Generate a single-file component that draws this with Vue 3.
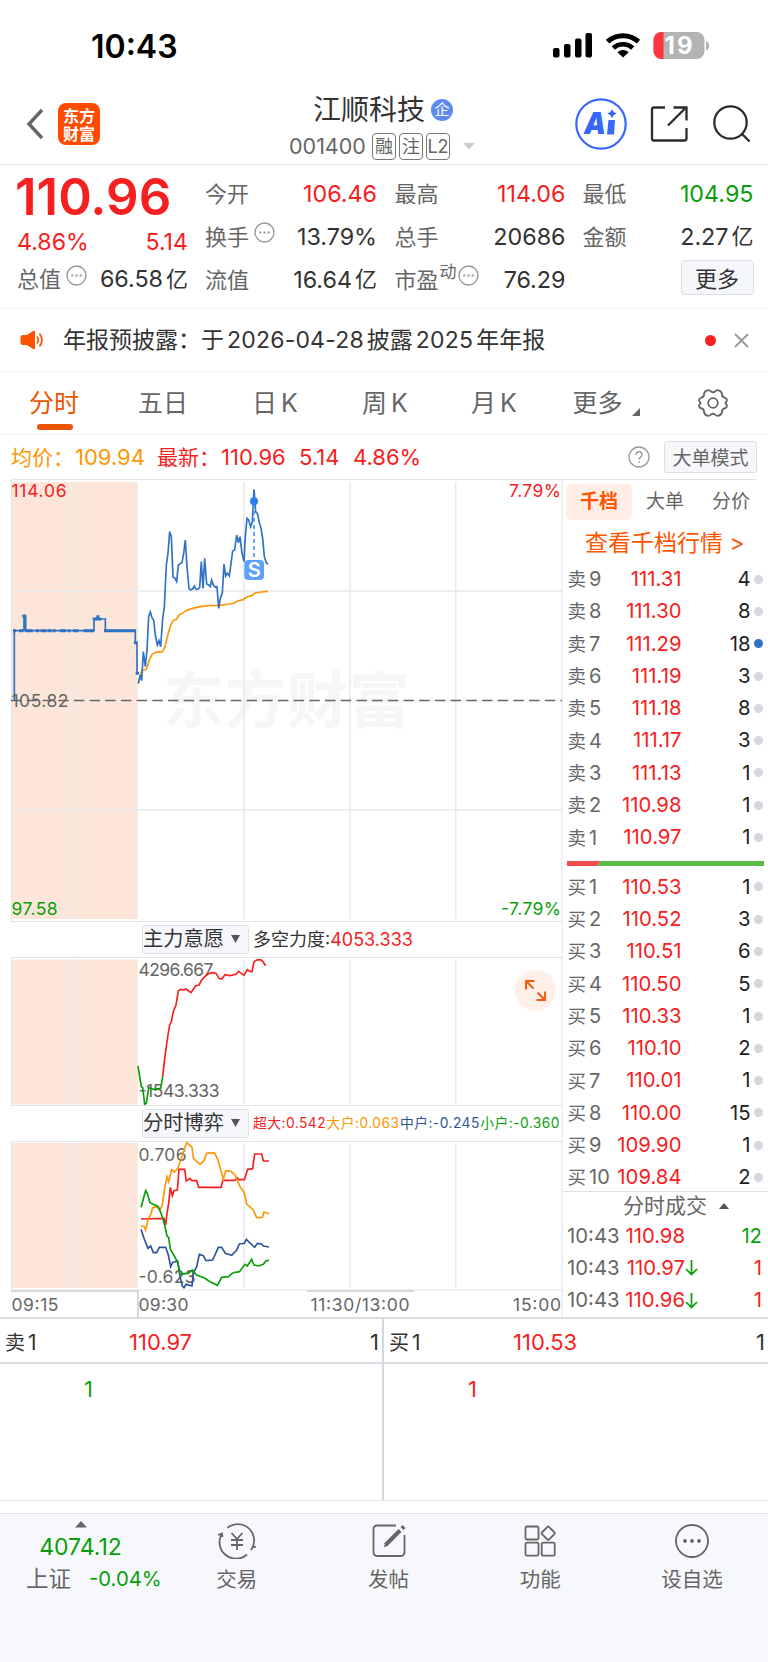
<script setup>
import { ref } from 'vue'

const tags = ['融', '注', 'L2']

const periods = [
  { label: '分时', width: 108 },
  { label: '五日', width: 110 },
  { label: '日', k: true, width: 114 },
  { label: '周', k: true, width: 106 },
  { label: '月', k: true, width: 112 },
]
const activePeriod = ref('分时')

const sells = [
  { label: '卖', level: 9, price: '111.31', qty: 4 },
  { label: '卖', level: 8, price: '111.30', qty: 8 },
  { label: '卖', level: 7, price: '111.29', qty: 18, big: true },
  { label: '卖', level: 6, price: '111.19', qty: 3 },
  { label: '卖', level: 5, price: '111.18', qty: 8 },
  { label: '卖', level: 4, price: '111.17', qty: 3 },
  { label: '卖', level: 3, price: '111.13', qty: 1 },
  { label: '卖', level: 2, price: '110.98', qty: 1 },
  { label: '卖', level: 1, price: '110.97', qty: 1 },
]

const buys = [
  { label: '买', level: 1, price: '110.53', qty: 1 },
  { label: '买', level: 2, price: '110.52', qty: 3 },
  { label: '买', level: 3, price: '110.51', qty: 6 },
  { label: '买', level: 4, price: '110.50', qty: 5 },
  { label: '买', level: 5, price: '110.33', qty: 1 },
  { label: '买', level: 6, price: '110.10', qty: 2 },
  { label: '买', level: 7, price: '110.01', qty: 1 },
  { label: '买', level: 8, price: '110.00', qty: 15 },
  { label: '买', level: 9, price: '109.90', qty: 1 },
  { label: '买', level: 10, price: '109.84', qty: 2 },
]

const deals = [
  { time: '10:43', price: '110.98', qty: 12, side: 'green' },
  { time: '10:43', price: '110.97', qty: 1, side: 'red', down: true },
  { time: '10:43', price: '110.96', qty: 1, side: 'red', down: true },
]

const gridX = [74.5, 244, 350, 455.7]
</script>

<template>
  <div class="page">
    <div class="status">
      <span class="clock">10:43</span>
      <svg class="status-icons" width="160" height="30" viewBox="550 30 160 30">
        <rect x="553" y="48" width="6.5" height="9.5" rx="2" />
        <rect x="564" y="44" width="6.5" height="13.5" rx="2" />
        <rect x="575" y="38.5" width="6.5" height="19" rx="2" />
        <rect x="585.5" y="33" width="6.5" height="24.5" rx="2" />
        <g fill="none" stroke="#000" stroke-width="5">
          <path d="M607.5 41.700A23 23 0 0 1 638.5 41.700" />
          <path d="M613.3 48A14.5 14.5 0 0 1 632.7 48" stroke-width="4.6" />
        </g>
        <path d="M617.3 52.300Q623 47.500 628.7 52.300L623 57.500Z" />
        <clipPath id="battery"><rect x="653.5" y="32" width="51" height="27" rx="8" /></clipPath>
        <g clip-path="url(#battery)">
          <rect x="653" y="32" width="52" height="27" fill="#b3b3b3" />
          <rect x="653" y="32" width="10.5" height="27" fill="#ff3640" />
        </g>
        <path d="M706 41v9.500q3.200-1.500 3.200-4.750T706 41z" fill="#b3b3b3" />
        <text x="664.5" y="54" class="battery-num" textLength="28">19</text>
      </svg>
    </div>

    <header class="header">
      <svg class="back" width="18" height="32" viewBox="0 0 18 32">
        <path d="M17 2 4 16l13 14" fill="none" stroke="#666" stroke-width="3.4" />
      </svg>
      <div class="logo"><span>东方</span><span>财富</span></div>
      <div class="title">
        <div class="name">江顺科技<span class="corp">企</span></div>
        <div class="code">
          <span class="code-num">001400</span>
          <span v-for="tag in tags" :key="tag" class="tag">{{ tag }}</span>
          <svg width="12" height="7" viewBox="0 0 12 7"><path d="M0 0h12L6 6.500z" fill="#ccc" /></svg>
        </div>
      </div>
      <svg class="header-icons" width="176" height="56" viewBox="574 96 176 56">
        <circle cx="601" cy="124" r="24.7" fill="#fff" stroke="#3768fb" stroke-width="2.2" />
        <text x="584" y="133.5" class="ai" textLength="22" lengthAdjust="spacingAndGlyphs">A</text>
        <path d="M608.500 120h6.500l-1 14.500h-7z" fill="#3768fb" />
        <path d="M612 109l1.600 3 3 1.600-3 1.600-1.600 3-1.600-3-3-1.600 3-1.600z" fill="#3768fb" />
        <g fill="none" stroke="#2c2c2c" stroke-width="2.3">
          <path d="M665 107.500h-11q-2 0-2 2v29q0 2 2 2h30.500q2 0 2-2V128M668 125.500 686 107.500M673.500 107.500h13v13" />
          <circle cx="730.5" cy="122.5" r="16.2" />
          <path d="M741.500 133.500l8 8" />
        </g>
      </svg>
    </header>

    <section class="quote">
      <div class="quote-main">
        <div class="price red">110.96</div>
        <div class="row between red"><span class="n1">4.86%</span><span class="n1">5.14</span></div>
        <div class="row">
          <span class="lbl">总值</span>
          <svg class="dots" viewBox="0 0 20 20"><circle cx="10" cy="10" r="9" /><path d="M5 10h2M9 10h2M13 10h2" /></svg>
          <span class="val">66.58<i>亿</i></span>
        </div>
      </div>
      <div class="quote-col col2">
        <div class="row"><span class="lbl">今开</span><span class="val red">106.46</span></div>
        <div class="row">
          <span class="lbl">换手</span>
          <svg class="dots" viewBox="0 0 20 20"><circle cx="10" cy="10" r="9" /><path d="M5 10h2M9 10h2M13 10h2" /></svg>
          <span class="val">13.79%</span>
        </div>
        <div class="row"><span class="lbl">流值</span><span class="val">16.64<i>亿</i></span></div>
      </div>
      <div class="quote-col col3">
        <div class="row"><span class="lbl">最高</span><span class="val red">114.06</span></div>
        <div class="row"><span class="lbl">总手</span><span class="val">20686</span></div>
        <div class="row">
          <span class="lbl">市盈</span><sup class="dyn">动</sup>
          <svg class="dots near" viewBox="0 0 20 20"><circle cx="10" cy="10" r="9" /><path d="M5 10h2M9 10h2M13 10h2" /></svg>
          <span class="val">76.29</span>
        </div>
      </div>
      <div class="quote-col col4">
        <div class="row"><span class="lbl">最低</span><span class="val green">104.95</span></div>
        <div class="row"><span class="lbl">金额</span><span class="val">2.27<i>亿</i></span></div>
        <div class="row end"><button class="more">更多</button></div>
      </div>
    </section>

    <section class="notice">
      <svg width="24" height="20" viewBox="0 0 24 20">
        <path d="M3 5h4l6-4q2-1 2 1v16q0 2-2 1l-6-4H3q-2.500 0-2.500-2.500v-5Q.5 5 3 5z" fill="#fd5202" />
        <path d="M17 6.500q2.500 3.500 0 7M19.500 3.500q5 6.500 0 13" fill="none" stroke="#fd5202" stroke-width="1.7" />
      </svg>
      <p>年报预披露：于<b>2026-04-28</b>披露<b>2025</b>年年报</p>
      <span class="dot"></span>
      <svg width="15" height="15" viewBox="0 0 15 15"><path d="M1 1l13 13M14 1 1 14" stroke="#999" stroke-width="1.9" /></svg>
    </section>

    <nav class="periods">
      <div
        v-for="p in periods"
        :key="p.label"
        class="period"
        :class="{ active: p.label === activePeriod }"
        :style="{ width: p.width + 'px' }"
        @click="activePeriod = p.label"
      >
        {{ p.label }}<b v-if="p.k">K</b>
      </div>
      <div class="period last">
        更多
        <svg width="8" height="8" viewBox="0 0 8 8"><path d="M8 0v8H0z" fill="#666" /></svg>
      </div>
      <svg class="gear" width="32" height="30" viewBox="-16 -15 32 30">
        <path d="M-5-12.800Q-3-12.800-2-11.500Q0-10 2-11.500Q3-12.800 5-12.800Q8.500-12 9-9Q8.800-6 11.500-5.500Q15-4 13.500-1.500Q11.500 0 13.500 1.500Q15 4 11.500 5.500Q8.800 6 9 9Q8.500 12 5 12.800Q3 12.800 2 11.500Q0 10-2 11.500Q-3 12.800-5 12.800Q-8.500 12-9 9Q-8.800 6-11.500 5.500Q-15 4-13.500 1.500Q-11.500 0-13.500-1.500Q-15-4-11.500-5.500Q-8.800-6-9-9Q-8.500-12-5-12.800Z" />
        <circle r="4.8" />
      </svg>
    </nav>

    <section class="summary">
      <span class="avg cn">均价：</span><span class="avg s-avg">109.94</span>
      <span class="red cn">最新：</span><span class="red s-last">110.96</span>
      <span class="red s-diff">5.14</span><span class="red">4.86%</span>
      <svg class="help" width="22" height="22" viewBox="0 0 22 22">
        <circle cx="11" cy="11" r="10" fill="none" stroke="#999" stroke-width="1.3" />
        <path d="M8 9q0-3.300 3-3.300t3 2.800q0 1.500-1.500 2.600T11 13.500M11 15v1.700" fill="none" stroke="#999" stroke-width="1.4" />
      </svg>
      <button class="mode">大单模式</button>
    </section>

    <main class="board">
      <div class="charts">
        <svg class="chart" width="552" height="443" viewBox="11 479 552 443">
          <rect x="11" y="482" width="126.8" height="437" fill="#fce6da" />
          <text x="163" y="723" class="watermark" textLength="247">东方财富</text>
          <g class="grid">
            <path v-for="x in gridX" :key="x" :d="`M${x} 482V919`" />
            <path d="M11 591H562M11 810H562" />
          </g>
          <path class="frame" d="M11.500 479V922M562 479V922M11 479.500H563M11 921.500H563" />
          <path d="M11 700.500H562" stroke="#666" stroke-width="1.7" stroke-dasharray="10.5 5.2" />
          <g class="line" transform="translate(0 470) scale(.33333)">
            <polyline class="c-orange" points="415,640 425,603 440,597 447,572 456,553 467,547 487,545 495,530 505,490 512,465 520,451 530,447 537,435 550,428 558,422 575,416 600,410 625,407 655,406 690,402 703,399 715,392 730,389 740,381 755,377 765,369 785,366 804,364" />
            <polyline class="c-blue" points="43,692 43,482 72,482 72,438 77,438 77,482 282,482 282,447 316,447 316,482 406,482 406,518 411,518 411,610" />
            <path class="c-blue" stroke-width="9" d="M39 482h9M58 482h12M76 482h22M107 482h10M122 482h17M143 482h12M159 482h8M180 482h18M203 482h8M219 482h16M250 482h32M312 482h95M67 438h11M278 447h26M289 440h9M402 518h9M407 610h10" />
            <polyline class="c-blue" points="415,640 421,615 425,632 430,545 436,590 441,540 446,440 451,426 456,443 461,450 466,495 472,525 477,512 482,530 488,445 493,412 499,285 504,250 509,185 514,200 519,322 525,325 530,335 535,285 546,277 551,250 556,210 561,290 567,355 572,360 578,357 583,348 588,357 593,358 599,353 604,275 609,355 614,265 620,342 626,345 631,350 635,330 640,345 646,352 651,350 656,415 661,385 667,370 672,282 677,318 682,310 688,318 698,243 704,240 710,195 715,218 720,200 726,250 732,275 736,200 741,145 746,150 752,170 757,155 762,58 767,125 773,133 778,158 783,175 788,205 793,260 799,278 804,282" />
          </g>
          <path d="M254 504V560" stroke="#4a97fb" stroke-width="1.7" stroke-dasharray="4 3" />
          <circle cx="254" cy="501.3" r="4" fill="#2a7af0" />
          <rect x="244.3" y="560" width="19.7" height="20" rx="4" fill="#5ba1fc" />
          <text x="254.2" y="577" class="mark">S</text>
          <text class="t red" x="11.5" y="497" textLength="55">114.06</text>
          <text class="t red" x="509" y="497" textLength="52">7.79%</text>
          <text class="t" x="11.5" y="706.5" textLength="57">105.82</text>
          <text class="t green" x="11.5" y="914.5" textLength="46">97.58</text>
          <text class="t green" x="501" y="914.5" textLength="60">-7.79%</text>
        </svg>

        <div class="indicator">
          <div class="select">主力意愿<svg width="9" height="9" viewBox="0 0 9 9"><path d="M0 0h9L4.500 8z" fill="#555" /></svg></div>
          <span class="force">多空力度:<b class="red">4053.333</b></span>
        </div>

        <svg class="chart" width="552" height="149" viewBox="11 957 552 149">
          <rect x="11" y="959.5" width="126.8" height="145" fill="#fce6da" />
          <g class="grid"><path v-for="x in gridX" :key="x" :d="`M${x} 959V1104`" /></g>
          <path class="frame" d="M11.500 957V1106M562 957V1106M11 957.500H563M11 1105.500H563" />
          <text class="t" x="138.5" y="975.5" textLength="75">4296.667</text>
          <text class="t" x="138.5" y="1097" textLength="81">-1543.333</text>
          <g class="line" transform="translate(130 910) scale(.33333)">
            <polyline class="c-green" points="24,468 34,530 38,533 44,582 49,580 56,533 70,538 92,535 98,500" />
            <polyline class="c-red" points="98,500 103,455 108,415 114,375 119,345 124,335 130,305 138,285 145,242 152,238 160,240 168,237 183,248 197,227 207,225 215,210 232,193 245,188 258,190 267,205 275,207 285,194 300,197 318,193 326,184 342,196 352,179 362,185 366,185 372,155 380,150 392,149 399,155 407,167" />
          </g>
          <circle cx="535.3" cy="990.3" r="20.5" fill="#fef0e8" />
          <path d="M533.500 988.500 526 981M526 989.500v-8.500h8.500M537.500 992.500l7.500 7.500M545 991.500v8.500h-8.500" fill="none" stroke="#f05a0a" stroke-width="1.9" />
        </svg>

        <div class="indicator">
          <div class="select">分时博弈<svg width="9" height="9" viewBox="0 0 9 9"><path d="M0 0h9L4.500 8z" fill="#555" /></svg></div>
          <div class="players">
            <span class="red">超大:0.542</span><span class="avg">大户:0.063</span><span class="navy">中户:-0.245</span><span class="green">小户:-0.360</span>
          </div>
        </div>

        <svg class="chart" width="552" height="176" viewBox="11 1141 552 176">
          <rect x="11" y="1143" width="126.8" height="145" fill="#fce6da" />
          <g class="grid"><path v-for="x in gridX" :key="x" :d="`M${x} 1143V1288`" /></g>
          <path class="frame" d="M11.500 1141V1290M562 1141V1317M11 1141.500H563M11 1290H563" />
          <path d="M11 1291H138M307 1291H414M138 1290V1317" stroke="#ccc" stroke-width="1.5" />
          <text class="t" x="138.5" y="1160.5" textLength="48">0.706</text>
          <text class="t" x="138.5" y="1282.5" textLength="57">-0.623</text>
          <g class="line" transform="translate(130 1110) scale(.33333)">
            <polyline class="c-red" points="33,327 102,325 107,345 111,310 116,280 121,232 127,257 132,242 142,240 147,178 164,178 169,213 180,205 185,212 200,212 206,232 273,232 279,211 315,211 321,203 327,209 343,209 353,178 368,176 374,132 395,132 400,153 417,153" />
            <polyline class="c-orange" points="33,348 43,350 47,360 55,325 62,315 68,293 80,290 90,300 97,285 104,235 111,200 116,215 125,178 133,186 143,176 153,148 162,120 170,98 178,105 186,112 190,145 210,163 222,152 230,130 253,128 263,148 280,208 287,182 303,184 315,195 330,230 343,248 350,282 370,300 380,323 397,322 402,306 417,311" />
            <polyline class="c-navy" points="33,358 42,385 54,415 62,408 70,428 80,428 88,412 107,412 115,435 122,470 128,457 143,453 150,500 157,528 162,533 168,523 186,528 190,490 200,470 208,433 220,437 228,452 248,450 265,412 275,412 286,430 305,436 320,420 328,402 343,400 349,388 358,397 374,412 382,400 395,402 400,408 417,411" />
            <polyline class="c-green" points="33,292 47,242 52,250 60,278 85,290 97,320 104,345 111,378 116,382 121,418 133,438 144,460 150,492 175,490 187,480 200,495 225,505 240,515 262,526 275,502 295,500 310,488 328,485 345,463 352,468 365,448 372,465 385,468 400,463 408,452 417,451" />
          </g>
          <text class="t" x="11.5" y="1310.5" textLength="47">09:15</text>
          <text class="t" x="138.5" y="1310.5" textLength="50">09:30</text>
          <text class="t" x="310.5" y="1310.5" textLength="99">11:30/13:00</text>
          <text class="t" x="513" y="1310.5" textLength="48">15:00</text>
        </svg>
      </div>

      <aside class="book">
        <div class="book-tabs"><span class="on">千档</span><span>大单</span><span>分价</span></div>
        <div class="book-link">查看千档行情 &gt;</div>
        <div v-for="s in sells" :key="s.level" class="level">
          <span class="side">{{ s.label }}<b>{{ s.level }}</b></span>
          <span class="lp">{{ s.price }}</span>
          <span class="lq">{{ s.qty }}</span>
          <span class="ld" :class="{ big: s.big }"></span>
        </div>
        <svg class="ratio" width="197" height="5" viewBox="0 0 197 5">
          <path d="M0 0h34l-4 5H0z" fill="#f24c4c" /><path d="M34 0h163v5H30z" fill="#5bbb46" />
        </svg>
        <div v-for="b in buys" :key="b.level" class="level">
          <span class="side">{{ b.label }}<b>{{ b.level }}</b></span>
          <span class="lp">{{ b.price }}</span>
          <span class="lq">{{ b.qty }}</span>
          <span class="ld"></span>
        </div>
        <div class="deals-head">
          分时成交<svg width="10" height="6" viewBox="0 0 10 6"><path d="M5 0l5 6H0z" fill="#555" /></svg>
        </div>
        <div v-for="(d, i) in deals" :key="i" class="deal">
          <span class="time">{{ d.time }}</span>
          <span class="dp red">{{ d.price }}</span>
          <svg v-if="d.down" width="13" height="16" viewBox="0 0 13 16"><path d="M6.500 0v14M1 9l5.500 5.500L12 9" fill="none" stroke="#0a9f0a" stroke-width="1.7" /></svg>
          <span class="dq" :class="d.side">{{ d.qty }}</span>
        </div>
      </aside>
    </main>

    <section class="best">
      <div class="half">
        <div class="best-head"><span class="bl">卖<b>1</b></span><span class="bp">110.97</span><span class="bq">1</span></div>
        <div class="best-body green">1</div>
      </div>
      <div class="half right">
        <div class="best-head"><span class="bl">买<b>1</b></span><span class="bp">110.53</span><span class="bq">1</span></div>
        <div class="best-body red">1</div>
      </div>
    </section>

    <footer class="tabbar">
      <div class="index">
        <svg width="12" height="7" viewBox="0 0 12 7"><path d="M6 0l6 6.500H0z" fill="#666" /></svg>
        <div class="index-val">4074.12</div>
        <div class="index-row"><span>上证</span><em>-0.04%</em></div>
      </div>
      <div class="item">
        <svg width="40" height="36" viewBox="-20 -18 40 36">
          <path d="M-9.500-13.200A16.300 16.300 0 0 1 15.500 6.500L14 9M15.500 6.500l3.500-1M10 13.500A16.500 16.500 0 0 1-15-7.500M-19-6l4-1.500.500 3.500" />
          <path d="M-5.500-8 0-2 5.500-8M0-2V9M-6-1H6M-6 4H6" />
        </svg>
        <span>交易</span>
      </div>
      <div class="item">
        <svg width="40" height="36" viewBox="-20 -18 40 36">
          <path d="M7-15.500H-11.500q-4 0-4 4V11q0 4 4 4H11.500q4 0 4-4V-6" />
          <path d="M-3.500 4 11-10.500M13-12.500l2-2" stroke-width="4" /><path d="M-5 5.500-1 3" stroke-width="1.5" />
        </svg>
        <span>发帖</span>
      </div>
      <div class="item">
        <svg width="40" height="36" viewBox="-20 -18 40 36">
          <rect x="-14.5" y="-14.5" width="13" height="13" rx="1.5" />
          <rect x="-14.5" y="1.7" width="13" height="13" rx="1.5" />
          <rect x="1.7" y="1.7" width="13" height="13" rx="1.5" />
          <rect x="3.2" y="-12.8" width="10" height="10" rx="1" transform="rotate(45 8.2 -7.8)" />
        </svg>
        <span>功能</span>
      </div>
      <div class="item">
        <svg width="40" height="36" viewBox="-20 -18 40 36">
          <circle r="16" /><g class="fill"><circle cx="-7" r="1.9" /><circle r="1.9" /><circle cx="7" r="1.9" /></g>
        </svg>
        <span>设自选</span>
      </div>
    </footer>
  </div>
</template>

<style>
body {
  margin: 0;
  background: #fff;
}
</style>

<style scoped>
.page {
  width: 768px;
  height: 1662px;
  overflow: hidden;
  display: flex;
  flex-direction: column;
  box-sizing: border-box;
  background: #fff;
  color: #333;
  font-family: Inter, "Noto Sans CJK SC", sans-serif;
  font-size: 22px;
  line-height: 1;
}

.page * {
  box-sizing: border-box;
}

b,
i,
em {
  font-weight: 400;
  font-style: normal;
}

.red {
  color: #f72020;
  fill: #f72020;
}

.green {
  color: #0a9f0a;
  fill: #0a9f0a;
}

.avg {
  color: #fd9705;
}

.navy {
  color: #2f5597;
}

.status {
  height: 84px;
  padding: 30px 58px 0 91px;
  display: flex;
  justify-content: space-between;
}

.clock {
  font-size: 32px;
  line-height: 33px;
  font-weight: 600;
  color: #000;
}

.battery-num {
  font-size: 24px;
  font-weight: 700;
  fill: #fff;
}

.header {
  height: 81px;
  border-bottom: 1px solid #e5e5e5;
  display: flex;
  align-items: center;
  padding: 0 18px 0 25px;
}

.back {
  margin-right: 15px;
}

.logo {
  width: 42px;
  height: 42px;
  border-radius: 8px;
  background: #ff4a00;
  color: #fff;
  font: 700 16px/18px "Noto Sans CJK SC", sans-serif;
  display: flex;
  flex-direction: column;
  align-items: center;
  justify-content: center;
}

.title {
  margin-left: 189px;
  width: 190px;
  height: 65px;
}

.name {
  font-size: 28px;
  line-height: 36px;
  padding-left: 24px;
  display: flex;
  align-items: center;
}

.corp {
  width: 22px;
  height: 22px;
  margin-left: 6px;
  border-radius: 50%;
  background: #5d8af0;
  color: #fff;
  font-size: 15px;
  line-height: 21px;
  text-align: center;
}

.code {
  display: flex;
  align-items: center;
  margin-top: 5px;
  height: 28px;
  color: #666;
}

.code-num {
  font-size: 21.5px;
  width: 83px;
}

.tag {
  width: 24px;
  height: 27px;
  margin-right: 3px;
  border: 1px solid #777;
  border-radius: 4px;
  font-size: 18px;
  line-height: 25px;
  display: flex;
  justify-content: center;
}

.code svg {
  margin-left: 10px;
}

.header-icons {
  margin-left: auto;
}

.ai {
  font: italic 900 30px Inter, sans-serif;
  fill: #3768fb;
}

.quote {
  height: 144px;
  display: flex;
  border-bottom: 1px solid #f3f3f3;
  padding: 7px 0 0 17px;
  flex-shrink: 0;
}

.quote-main {
  width: 171px;
}

.price {
  height: 51px;
  margin-left: -2px;
  font-size: 51px;
  line-height: 50px;
  font-weight: 600;
}

.quote-main .row:nth-child(2) {
  height: 40px;
}

.quote-main .row:nth-child(3) {
  height: 32px;
}

.row {
  display: flex;
  align-items: center;
  height: 43px;
}

.between {
  justify-content: space-between;
}

.end {
  justify-content: flex-end;
}

.quote-col {
  margin-left: 17px;
}

.col2 {
  width: 172px;
}

.col3,
.col4 {
  width: 171px;
}

.col3 {
  margin-left: 17.5px;
}

.lbl {
  color: #666;
}

.n1 {
  font-size: 23.2px;
}

.val {
  margin-left: auto;
  font-size: 23.3px;
  display: flex;
  align-items: center;
}

.val i {
  font-size: 22px;
  margin-left: 3px;
}

.dots {
  width: 21px;
  height: 21px;
  margin: -8px 0 0 5px;
  fill: none;
  stroke: #999;
  stroke-width: 1.3;
}

.dots path {
  stroke-width: 2;
}

.dots.near {
  margin-left: 1px;
}

.dyn {
  color: #666;
  font-size: 17px;
  margin: -14px 0 0 1px;
}

.more {
  width: 73px;
  height: 35px;
  margin-bottom: 5px;
  border: 1px solid #dcdfe6;
  border-radius: 4px;
  background: #f6f7fb;
  color: #333;
  font: 22px/30px "Noto Sans CJK SC", sans-serif;
  padding: 0;
}

.notice {
  height: 63px;
  border-bottom: 1px solid #f3f3f3;
  display: flex;
  align-items: center;
  padding: 0 19px 0 20px;
}

.notice p {
  margin: 0 0 0 19px;
  font-size: 23px;
}

.notice b {
  margin: 0 3px;
  letter-spacing: 0.2px;
}

.dot {
  width: 11px;
  height: 11px;
  border-radius: 50%;
  background: #f72020;
  margin: 0 18px 0 auto;
}

.periods {
  height: 63px;
  border-bottom: 1px solid #f0f0f0;
  display: flex;
  align-items: center;
  flex-shrink: 0;
  font-size: 25px;
  color: #666;
}

.period {
  height: 62px;
  display: flex;
  align-items: center;
  justify-content: center;
  position: relative;
}

.period b {
  margin-left: 4px;
}

.active {
  color: #ea5504;
}

.active::after {
  content: "";
  position: absolute;
  bottom: 4px;
  left: 37px;
  width: 36px;
  height: 6px;
  border-radius: 3px;
  background: #ea5504;
}

.last {
  width: 112px;
  gap: 9px;
}

.last svg {
  margin-top: 18px;
}

.gear {
  margin-left: 35px;
  fill: none;
  stroke: #666;
  stroke-width: 1.8;
}

.summary {
  height: 44px;
  display: flex;
  align-items: center;
  padding-left: 11px;
  font-size: 22px;
  flex-shrink: 0;
}

.cn {
  font-size: 21px;
  width: 64px;
}

.s-avg {
  width: 82px;
}

.s-last {
  width: 78px;
}

.s-diff {
  width: 54px;
}

.help {
  margin-left: auto;
}

.mode {
  width: 93px;
  height: 32px;
  margin: 0 11px 0 14px;
  border: 1px solid #dcdfe6;
  border-radius: 3px;
  background: #f6f7fb;
  color: #666;
  font: 19px/28px "Noto Sans CJK SC", sans-serif;
  padding: 0;
}

.board {
  display: flex;
  height: 838px;
  flex-shrink: 0;
  padding-left: 11px;
}

.charts {
  width: 552px;
  display: flex;
  flex-direction: column;
}

.chart {
  display: block;
  flex-shrink: 0;
}

.grid path {
  stroke: #e6e9f0;
  stroke-width: 1.5;
  fill: none;
}

.frame {
  stroke: #dfe2e9;
  stroke-width: 1;
  fill: none;
}

.line {
  fill: none;
  stroke-width: 5;
}

.c-blue {
  stroke: #2f72c3;
}

.c-orange {
  stroke: #fd9705;
}

.c-red {
  stroke: #f72020;
}

.c-green {
  stroke: #0a9f0a;
}

.c-navy {
  stroke: #2f5597;
}

.t {
  font-size: 17.5px;
}

.t:not(.red):not(.green) {
  fill: #666;
}

.watermark {
  font-family: "Noto Sans CJK SC", sans-serif;
  font-weight: 700;
  font-size: 61px;
  fill: #f6f6f6;
}

.mark {
  font-size: 20px;
  font-weight: 600;
  fill: #fff;
  text-anchor: middle;
}

.indicator {
  height: 35px;
  display: flex;
  align-items: center;
  padding-left: 131px;
  border-right: 1px solid #e6e9f0;
  flex-shrink: 0;
}

.select {
  width: 107px;
  height: 29px;
  border: 1px solid #dfe2e9;
  border-radius: 3px;
  background: #f6f7fb;
  font-size: 20.3px;
  display: flex;
  align-items: center;
}

.select svg {
  margin-left: 7px;
}

.force {
  margin-left: 4px;
  font-size: 18px;
}

.players {
  margin-left: 4px;
  width: 307px;
  font-size: 13.8px;
  letter-spacing: 0.45px;
  display: flex;
  justify-content: space-between;
  white-space: nowrap;
}

.book {
  width: 205px;
}

.book-tabs {
  height: 41px;
  padding: 4px 7px 0 3px;
  border-top: 1px solid #dfe2e9;
  width: 194px;
  display: flex;
  font-size: 19px;
  color: #666;
}

.book-tabs span {
  flex-shrink: 0;
  width: 66px;
  height: 36px;
  line-height: 36px;
  text-align: center;
}

.book-tabs .on {
  background: #feeee6;
  color: #ff5500;
  font-weight: 700;
  border-radius: 5px;
}

.book-link {
  height: 43px;
  padding-left: 22px;
  font-size: 23px;
  line-height: 46px;
  color: #ff5500;
  white-space: nowrap;
}

.level {
  height: 32.3px;
  display: flex;
  align-items: center;
  padding-left: 4.5px;
  font-size: 20.3px;
}

.side {
  width: 46px;
  font-size: 18.5px;
  color: #666;
  white-space: nowrap;
}

.side b {
  margin-left: 3px;
  font-size: 20px;
}

.lp {
  width: 68px;
  text-align: right;
  color: #f72020;
}

.lq {
  width: 69px;
  text-align: right;
  color: #222;
}

.ld {
  width: 9px;
  height: 9px;
  margin-left: 3px;
  border-radius: 50%;
  background: #d4d7de;
}

.ld.big {
  background: #2f72c3;
}

.ratio {
  display: block;
  margin: 7px 0 5px 3.5px;
}

.deals-head {
  margin-top: -3px;
  height: 29px;
  border-top: 1px solid #dcdfe6;
  display: flex;
  align-items: center;
  padding-left: 60px;
  font-size: 21px;
  color: #666;
}

.deals-head svg {
  margin-left: 12px;
}

.deal {
  height: 32.4px;
  display: flex;
  align-items: center;
  padding: 0 6px 0 4px;
  font-size: 20.3px;
}

.time {
  width: 54px;
  color: #666;
}

.dp {
  width: 64px;
  text-align: right;
}

.dq {
  margin-left: auto;
}

.best {
  height: 184px;
  flex-shrink: 0;
  display: flex;
  border-top: 2px solid #dadde4;
  border-bottom: 1px solid #e8e8e8;
}

.half {
  width: 382px;
  height: 181px;
}

.half.right {
  width: 386px;
  border-left: 2px solid #d4d7de;
}

.best-head {
  height: 45px;
  border-bottom: 2px solid #dadde4;
  display: flex;
  align-items: center;
  padding: 3px 3px 0 5px;
  font-size: 22px;
}

.bl {
  width: 124px;
  font-size: 20px;
}

.bl b {
  margin-left: 3px;
  font-size: 21px;
}

.bp {
  color: #f72020;
}

.bq {
  margin-left: auto;
}

.best-body {
  padding: 14px 0 0 84px;
  font-size: 22px;
}

.tabbar {
  margin-top: 12px;
  flex: 1;
  border-top: 1px solid #e1e3e8;
  background: #f7f8fb;
  display: flex;
  color: #666;
}

.index {
  width: 161px;
  padding-top: 7px;
  display: flex;
  flex-direction: column;
  align-items: center;
}

.index-val {
  color: #0a9f0a;
  font-size: 23px;
  margin-top: 8px;
}

.index-row {
  display: flex;
  align-items: center;
  padding-left: 26px;
  width: 161px;
  gap: 18px;
  margin-top: 9px;
  font-size: 22.5px;
  white-space: nowrap;
}

.index-row em {
  color: #0a9f0a;
  font-size: 20.3px;
}

.item {
  width: 151.7px;
  padding-top: 9px;
  display: flex;
  flex-direction: column;
  align-items: center;
  font-size: 20.5px;
  gap: 11px;
}

.item svg {
  fill: none;
  stroke: #666;
  stroke-width: 1.8;
}

.fill {
  fill: #666;
  stroke: none;
}
</style>
